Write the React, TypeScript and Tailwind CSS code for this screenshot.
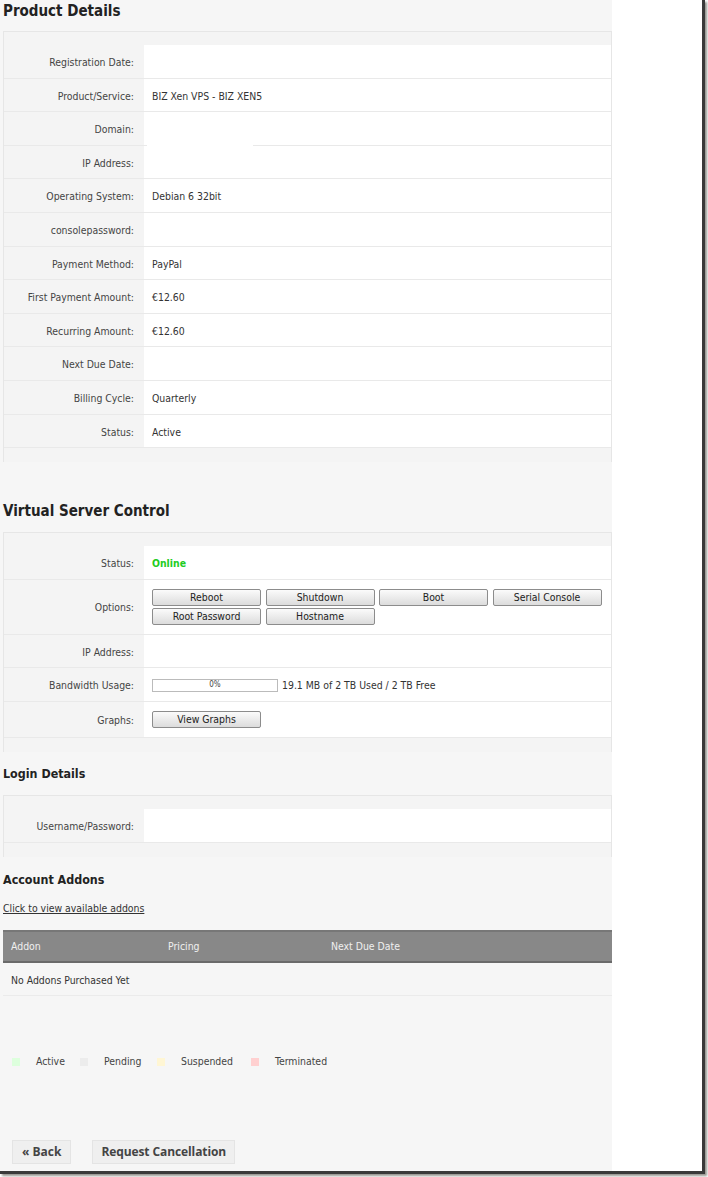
import React from 'react'

// ---------------------------------------------------------------------------
// Shared bits
// ---------------------------------------------------------------------------

const body = "font-['DejaVu_Sans_Condensed','DejaVu_Sans',sans-serif]"

function SectionTitle({ children, small }: { children: React.ReactNode; small?: boolean }) {
  return (
    <h2
      className={`${body} font-bold text-[#222] ${small ? 'text-[12.4px]' : 'text-[15px]'} leading-none px-[3px]`}
    >
      {children}
    </h2>
  )
}

function Row({
  label,
  children,
  h = 'h-[33.6px]',
}: {
  label: string
  children?: React.ReactNode
  h?: string
}) {
  return (
    <div className={`flex ${h}`}>
      <div className="w-[140px] shrink-0 border-b border-[#e9e9e9] flex items-center justify-end pr-[10px] pt-[3px] text-[#444]">
        {label}
      </div>
      <div className="flex-1 bg-white flex items-center pl-[8px] pt-[3px] text-[#333] border-b border-[#e9e9e9]">
        {children}
      </div>
    </div>
  )
}

function Panel({ children }: { children: React.ReactNode }) {
  return (
    <div className={`mx-[3px] w-[609px] border-t border-l border-r border-[#e6e6e6] bg-[#f4f4f4] pt-[13px] pb-[14px] ${body} text-[10.4px]`}>
      {children}
    </div>
  )
}

function GrayButton({ children }: { children: React.ReactNode }) {
  return (
    <button
      type="button"
      className={`w-[109px] h-[17px] rounded-[2px] border border-[#8c8c8c] bg-gradient-to-b from-[#fbfbfb] to-[#dcdcdc] text-[10.4px] text-[#222] leading-none ${body}`}
    >
      {children}
    </button>
  )
}

// ---------------------------------------------------------------------------
// Product details
// ---------------------------------------------------------------------------

const productRows: [string, string][] = [
  ['Registration Date:', ''],
  ['Product/Service:', 'BIZ Xen VPS - BIZ XEN5'],
  ['Domain:', ''],
  ['IP Address:', ''],
  ['Operating System:', 'Debian 6 32bit'],
  ['consolepassword:', ''],
  ['Payment Method:', 'PayPal'],
  ['First Payment Amount:', '€12.60'],
  ['Recurring Amount:', '€12.60'],
  ['Next Due Date:', ''],
  ['Billing Cycle:', 'Quarterly'],
  ['Status:', 'Active'],
]

const legend = [
  { label: 'Active', color: 'bg-[#ddffdd]', w: 'w-[68px]' },
  { label: 'Pending', color: 'bg-[#ececec]', w: 'w-[77px]' },
  { label: 'Suspended', color: 'bg-[#fff6d4]', w: 'w-[94px]' },
  { label: 'Terminated', color: 'bg-[#ffd0d0]', w: 'w-[90px]' },
]

export default function App() {
  return (
    <div className="w-[708px] h-[1177px] bg-white overflow-hidden">
      <div className="w-[705px] h-[1174px] border-r-[3px] border-b-[3px] border-[#3a3a3a] shadow-[2px_2px_2px_rgba(80,80,70,0.6)] flex">
        <div className="w-[612px] h-full bg-[#f6f6f6] pt-[4px]">
          <SectionTitle>Product Details</SectionTitle>

          <div className="mt-[12px]">
            <Panel>
              {productRows.map(([label, value]) => (
                <div key={label}>
                  <Row label={label}>{value}</Row>
                  {label === 'Domain:' && (
                    // blank patch across the bottom edge of the domain cell
                    <div className="flex h-0">
                      <div className="w-[143px] shrink-0" />
                      <div className="w-[106px] h-px bg-white -mt-px" />
                    </div>
                  )}
                </div>
              ))}
            </Panel>
          </div>

          <div className="mt-[42px]">
            <SectionTitle>Virtual Server Control</SectionTitle>
          </div>
          <div className="mt-[13px]">
            <Panel>
              <Row label="Status:">
                <span className="font-bold text-[#22cc22]">Online</span>
              </Row>
              <Row label="Options:" h="h-[55px]">
                <div className="grid grid-cols-[109px_109px_109px_109px] gap-x-[4.5px] gap-y-[2px] -mt-[3px]">
                  <GrayButton>Reboot</GrayButton>
                  <GrayButton>Shutdown</GrayButton>
                  <GrayButton>Boot</GrayButton>
                  <GrayButton>Serial Console</GrayButton>
                  <GrayButton>Root Password</GrayButton>
                  <GrayButton>Hostname</GrayButton>
                </div>
              </Row>
              <Row label="IP Address:" />
              <Row label="Bandwidth Usage:">
                <div className="w-[126px] h-[13px] border border-[#bbb] bg-white flex items-center justify-center text-[8px] text-[#444] -mt-[2px]">
                  0%
                </div>
                <span className="ml-[4px]">19.1 MB of 2 TB Used / 2 TB Free</span>
              </Row>
              <Row label="Graphs:" h="h-[36px]">
                <div className="-mt-[3px]">
                  <GrayButton>View Graphs</GrayButton>
                </div>
              </Row>
            </Panel>
          </div>

          <div className="mt-[16px]">
            <SectionTitle small>Login Details</SectionTitle>
          </div>
          <div className="mt-[15px]">
            <Panel>
              <Row label="Username/Password:" />
            </Panel>
          </div>

          <div className="mt-[17px]">
            <SectionTitle small>Account Addons</SectionTitle>
          </div>
          <a href="#" className={`block mt-[15px] ml-[3px] w-fit text-[10.4px] text-[#333] underline ${body}`}>
            Click to view available addons
          </a>

          <div className={`mt-[13px] mx-[3px] w-[609px] ${body} text-[10.4px]`}>
            <div className="h-[33px] bg-[#888888] border-t-2 border-b-2 border-t-[#777] border-b-[#6a6a6a] flex items-center text-[#f0f0f0]">
              <span className="w-[165px] shrink-0 pl-[8px]">Addon</span>
              <span className="w-[163px] shrink-0">Pricing</span>
              <span>Next Due Date</span>
            </div>
            <div className="h-[33px] flex items-center pl-[8px] pt-[4px] text-[#333] border-b border-[#ebebeb]">
              No Addons Purchased Yet
            </div>
          </div>

          <div className={`mt-[58px] ml-[12px] flex items-center ${body} text-[10.4px] text-[#444]`}>
            {legend.map((l) => (
              <div key={l.label} className={`flex items-center ${l.w}`}>
                <span className={`w-[8px] h-[8px] ${l.color}`} />
                <span className="ml-[16px]">{l.label}</span>
              </div>
            ))}
          </div>

          <div className="mt-[70px] ml-[12px] flex gap-[21px] font-['Open_Sans',sans-serif]">
            <button
              type="button"
              className="h-[24px] px-[9px] bg-[#efefef] border border-[#e4e4e4] text-[12px] font-bold text-[#444] leading-none"
            >
              « Back
            </button>
            <button
              type="button"
              className="h-[24px] px-[8px] bg-[#efefef] border border-[#e4e4e4] text-[12px] font-bold text-[#444] leading-none tracking-[-0.1px]"
            >
              Request Cancellation
            </button>
          </div>
        </div>
        <div className="flex-1 bg-white" />
      </div>
    </div>
  )
}
